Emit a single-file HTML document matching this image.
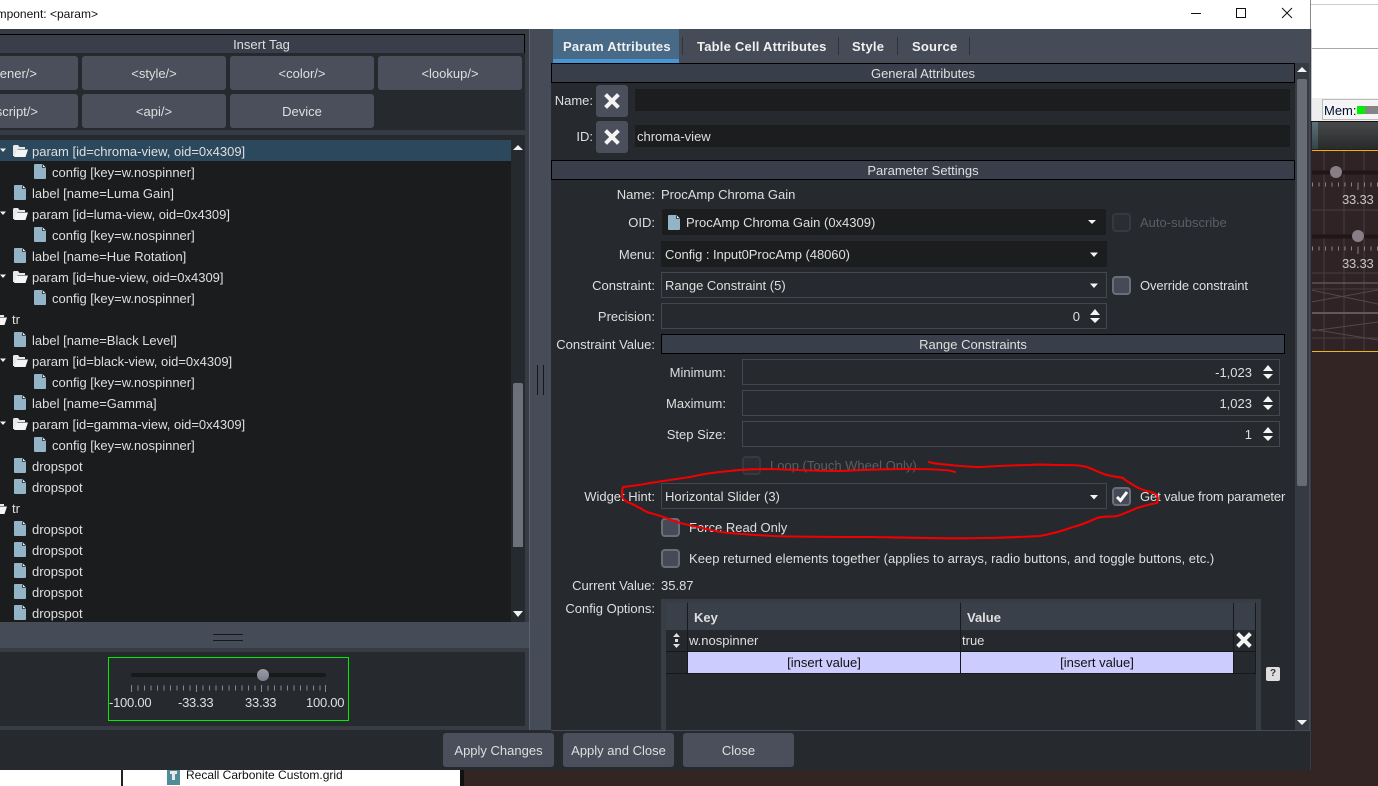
<!DOCTYPE html>
<html>
<head>
<meta charset="utf-8">
<title>Component</title>
<style>
html,body{margin:0;padding:0;background:#332524;}
#p{position:relative;width:1378px;height:786px;overflow:hidden;background:#332524;font-family:"Liberation Sans",Arial,sans-serif;font-size:13px;color:#dfdfdf;letter-spacing:0;}
#p div{position:absolute;box-sizing:border-box;}
.t{position:absolute;white-space:nowrap;line-height:15px;height:15px;}
.r{text-align:right;}
.c{text-align:center;}
.hd{background:#383f4a;border:1px solid #000;height:20px;text-align:center;line-height:19px;}
.btn{background:#4a4f5b;border-radius:3px;text-align:center;line-height:35px;height:34px;}
.in{background:#1b1d1f;}
.bx{border:1px solid #44474d;background:#26292e;height:26px;}
.cb{width:19px;height:19px;background:#454a56;border:2px solid #696e79;border-radius:4px;}
svg{position:absolute;overflow:visible;}
.sep{background:#2f343c;width:1px;height:18px;top:37px;}
.tab{font-weight:bold;top:39px;letter-spacing:.22px;color:#f0f0f0;}
</style>
</head>
<body>
<div id="p">
<svg width="0" height="0" style="position:absolute">
<defs>
<symbol id="doc" viewBox="0 0 12 15"><path d="M1 0H8.500L12 3.500V14a1 1 0 0 1-1 1H1a1 1 0 0 1-1-1V1a1 1 0 0 1 1-1z" fill="#92b4c6"/><path d="M8.500 0.500V3.500H11.500" fill="#fff" stroke="#1b1d1f" stroke-width=".8"/></symbol>
<symbol id="fold" viewBox="0 0 15 12"><path d="M0 1.500Q0 0 1.500 0H5L6.500 2H12V4H4.500L2 11H0z" fill="#e8e8e8"/><path d="M4 4.500H15L12.500 12H1z" fill="#f5f5f5"/></symbol>
<symbol id="x" viewBox="0 0 16 16"><path d="M3 3L13 13M13 3L3 13" stroke="#f4f4f4" stroke-width="4" stroke-linecap="square" fill="none"/></symbol>
</defs>
</svg>

<!-- background window -->
<div style="left:1311px;top:0;width:67px;height:98px;background:#fff;"></div>
<div style="left:1311px;top:4px;width:67px;height:1px;background:#ccc;"></div>
<div style="left:1311px;top:48px;width:67px;height:1px;background:#aaa;"></div>
<div style="left:1311px;top:98px;width:67px;height:24px;background:#eee;"></div>
<div style="left:1322px;top:99px;width:56px;height:21px;background:#f4f4f4;border:1px solid #bbb;border-right:0;"></div>
<span class="t" style="left:1324px;top:103px;font-size:13px;color:#001030;">Mem:</span>
<div style="left:1357px;top:106px;width:21px;height:8px;background:#858585;"></div>
<div style="left:1357px;top:106px;width:8px;height:8px;background:#00f000;"></div>
<div style="left:1311px;top:121px;width:67px;height:1px;background:#111;"></div>
<div style="left:1311px;top:122px;width:67px;height:27px;background:linear-gradient(#47494b,#2a2a2a);"></div>
<div style="left:1311px;top:122px;width:7px;height:27px;background:linear-gradient(#5e7078,#34444a);"></div>
<div style="left:1311px;top:149px;width:67px;height:1px;background:#222;"></div>
<div style="left:1311px;top:150px;width:67px;height:1px;background:#f0b400;"></div>
<div style="left:1311px;top:151px;width:67px;height:200px;background:#2f2326;"></div>
<svg style="left:0;top:0;" width="1378" height="786">
<g stroke="#4a3d42" stroke-width="1" fill="none">
<path d="M1324 151V351M1344 151V351M1364 151V351"/>
<path d="M1311 210H1378M1311 273H1378"/>
<path d="M1311 283H1378" stroke="#75686c"/><path d="M1311 289H1378"/>
<path d="M1311 313H1378" stroke="#64565a" stroke-width="2"/>
<path d="M1311 338H1378"/>
<path d="M1311 302L1378 290M1311 290L1378 304M1311 331L1378 322M1311 329L1378 340" stroke="#55474b"/>
</g>
<path d="M1311 172.500H1378M1311 236.500H1378" stroke="#211617" stroke-width="4"/>
<g stroke="#8f8287" fill="none">
<path d="M1312 184.500H1378M1312 248.500H1378" stroke-width="4" stroke-dasharray="1 5.500"/>
<path d="M1358 183V190M1358 247V254"/>
</g>
<circle cx="1336" cy="172" r="6" fill="#8a7e86"/>
<circle cx="1358" cy="236" r="6" fill="#8a7e86"/>
<path d="M1311 351.500H1378" stroke="#f0b428"/>
</svg>
<span class="t" style="left:1342px;top:192px;font-size:13px;letter-spacing:-.2px;color:#cbc3c3;">33.33</span>
<span class="t" style="left:1342px;top:256px;font-size:13px;letter-spacing:-.2px;color:#cbc3c3;">33.33</span>

<!-- bottom background -->
<div style="left:0;top:770px;width:121px;height:16px;background:#fff;"></div>
<div style="left:121px;top:770px;width:2px;height:16px;background:#222;"></div>
<div style="left:123px;top:770px;width:337px;height:16px;background:#fff;"></div>
<div style="left:460px;top:770px;width:4px;height:16px;background:#111;"></div>
<svg style="left:167px;top:769px;" width="14" height="16"><rect width="13" height="16" fill="#4f8d96"/><path d="M3 2H10V5H8V11H5V5H3z" fill="#e8e8e8"/></svg>
<span class="t" style="left:186px;top:768px;color:#111;font-size:12px;">Recall Carbonite Custom.grid</span>

<!-- dialog -->
<div style="left:0;top:0;width:1310px;height:29px;background:#fff;"></div>
<div style="left:0;top:0;width:98px;height:29px;overflow:hidden;display:flex;justify-content:flex-end;">
<span style="white-space:nowrap;line-height:29px;color:#111;font-size:12px;flex:none;">Component: &lt;param&gt;</span></div>
<svg style="left:1185px;top:0;" width="115" height="29" fill="none" stroke="#111" stroke-width="1">
<path d="M6 13.500H16"/><rect x="51.500" y="8.500" width="9" height="9"/><path d="M97 8L107 18M107 8L97 18"/>
</svg>
<div style="left:0;top:29px;width:1310px;height:741px;background:#454b57;"></div>
<div style="left:1310px;top:0;width:1px;height:29px;background:#8a8a8a;"></div>
<div style="left:1310px;top:29px;width:1px;height:741px;background:#3a3e46;"></div>
<div style="left:1311px;top:29px;width:1px;height:92px;background:#c4c4c4;"></div>
<div style="left:1311px;top:122px;width:1px;height:648px;background:#2c2426;"></div>

<!-- left panel -->
<div style="left:0;top:29px;width:529px;height:593px;background:#373b43;"></div>
<div class="hd" style="left:-2px;top:34px;width:527px;">Insert Tag</div>
<div style="left:0;top:53px;width:525px;height:77px;background:#26292e;"></div>
<div class="btn" style="left:-66px;top:56px;width:144px;"><span style="position:absolute;right:41px;top:0;">&lt;listener/&gt;</span></div>
<div class="btn" style="left:82px;top:56px;width:144px;">&lt;style/&gt;</div>
<div class="btn" style="left:230px;top:56px;width:144px;">&lt;color/&gt;</div>
<div class="btn" style="left:378px;top:56px;width:144px;">&lt;lookup/&gt;</div>
<div class="btn" style="left:-66px;top:94px;width:144px;"><span style="position:absolute;right:40px;top:0;">&lt;script/&gt;</span></div>
<div class="btn" style="left:82px;top:94px;width:144px;">&lt;api/&gt;</div>
<div class="btn" style="left:230px;top:94px;width:144px;">Device</div>

<div style="left:0;top:135px;width:525px;height:487px;background:#26292e;"></div>
<div style="left:0;top:140px;width:511px;height:482px;background:#1a1c1e;"></div>
<div style="left:0;top:140px;width:511px;height:21px;background:#2b485c;"></div>
<div style="left:513px;top:383px;width:10px;height:164px;background:#6c707a;border-radius:2px 2px 0 0;"></div>
<svg style="left:0;top:0;" width="530" height="640" fill="#f2f2f2">
<path d="M513 150L518 145L523 150zM513 611L523 611L518 617z"/>
<path d="M0 148.500H6L3 152zM0 211.500H6L3 215zM0 274.500H6L3 278zM0 358.500H6L3 362zM0 421.500H6L3 425z"/>
</svg>

<svg style="left:13px;top:145px;" width="15" height="12"><use href="#fold"/></svg>
<svg style="left:13px;top:208px;" width="15" height="12"><use href="#fold"/></svg>
<svg style="left:13px;top:271px;" width="15" height="12"><use href="#fold"/></svg>
<svg style="left:-8px;top:313px;" width="15" height="12"><use href="#fold"/></svg>
<svg style="left:13px;top:355px;" width="15" height="12"><use href="#fold"/></svg>
<svg style="left:13px;top:418px;" width="15" height="12"><use href="#fold"/></svg>
<svg style="left:-8px;top:502px;" width="15" height="12"><use href="#fold"/></svg>

<svg style="left:34px;top:164px;" width="12" height="15"><use href="#doc"/></svg>
<svg style="left:14px;top:185px;" width="12" height="15"><use href="#doc"/></svg>
<svg style="left:34px;top:227px;" width="12" height="15"><use href="#doc"/></svg>
<svg style="left:14px;top:248px;" width="12" height="15"><use href="#doc"/></svg>
<svg style="left:34px;top:290px;" width="12" height="15"><use href="#doc"/></svg>
<svg style="left:14px;top:332px;" width="12" height="15"><use href="#doc"/></svg>
<svg style="left:34px;top:374px;" width="12" height="15"><use href="#doc"/></svg>
<svg style="left:14px;top:395px;" width="12" height="15"><use href="#doc"/></svg>
<svg style="left:34px;top:437px;" width="12" height="15"><use href="#doc"/></svg>
<svg style="left:14px;top:458px;" width="12" height="15"><use href="#doc"/></svg>
<svg style="left:14px;top:479px;" width="12" height="15"><use href="#doc"/></svg>
<svg style="left:14px;top:521px;" width="12" height="15"><use href="#doc"/></svg>
<svg style="left:14px;top:542px;" width="12" height="15"><use href="#doc"/></svg>
<svg style="left:14px;top:563px;" width="12" height="15"><use href="#doc"/></svg>
<svg style="left:14px;top:584px;" width="12" height="15"><use href="#doc"/></svg>
<svg style="left:14px;top:605px;" width="12" height="15"><use href="#doc"/></svg>

<span class="t" style="left:32px;top:144px;">param [id=chroma-view, oid=0x4309]</span>
<span class="t" style="left:52px;top:165px;">config [key=w.nospinner]</span>
<span class="t" style="left:32px;top:186px;">label [name=Luma Gain]</span>
<span class="t" style="left:32px;top:207px;">param [id=luma-view, oid=0x4309]</span>
<span class="t" style="left:52px;top:228px;">config [key=w.nospinner]</span>
<span class="t" style="left:32px;top:249px;">label [name=Hue Rotation]</span>
<span class="t" style="left:32px;top:270px;">param [id=hue-view, oid=0x4309]</span>
<span class="t" style="left:52px;top:291px;">config [key=w.nospinner]</span>
<span class="t" style="left:12px;top:312px;">tr</span>
<span class="t" style="left:32px;top:333px;">label [name=Black Level]</span>
<span class="t" style="left:32px;top:354px;">param [id=black-view, oid=0x4309]</span>
<span class="t" style="left:52px;top:375px;">config [key=w.nospinner]</span>
<span class="t" style="left:32px;top:396px;">label [name=Gamma]</span>
<span class="t" style="left:32px;top:417px;">param [id=gamma-view, oid=0x4309]</span>
<span class="t" style="left:52px;top:438px;">config [key=w.nospinner]</span>
<span class="t" style="left:32px;top:459px;">dropspot</span>
<span class="t" style="left:32px;top:480px;">dropspot</span>
<span class="t" style="left:12px;top:501px;">tr</span>
<span class="t" style="left:32px;top:522px;">dropspot</span>
<span class="t" style="left:32px;top:543px;">dropspot</span>
<span class="t" style="left:32px;top:564px;">dropspot</span>
<span class="t" style="left:32px;top:585px;">dropspot</span>
<span class="t" style="left:32px;top:606px;">dropspot</span>

<!-- splitter / preview -->
<div style="left:213px;top:634px;width:30px;height:1px;background:#15171a;"></div>
<div style="left:213px;top:640px;width:30px;height:1px;background:#15171a;"></div>
<div style="left:0;top:648px;width:529px;height:82px;background:#373b43;"></div>
<div style="left:0;top:652px;width:525px;height:74px;background:#26292e;"></div>
<div style="left:108px;top:657px;width:241px;height:64px;border:1px solid #00ee00;"></div>
<div style="left:131px;top:673px;width:195px;height:4px;background:#17191b;border-radius:2px;"></div>
<svg style="left:0;top:0;" width="400" height="730">
<defs><linearGradient id="g" x1="0" y1="0" x2="0" y2="1"><stop offset="0" stop-color="#999ca6"/><stop offset="1" stop-color="#7c7f8a"/></linearGradient></defs>
<circle cx="263" cy="675" r="6" fill="url(#g)"/>
<line x1="131" x2="326" y1="688" y2="688" stroke="#85888f" stroke-width="5" stroke-dasharray="1 5.500"/>
<path d="M131.500 685V692M196.500 685V692M261.500 685V692M325.500 685V692" stroke="#85888f"/>
</svg>
<span class="t" style="left:109px;top:695px;font-size:13px;letter-spacing:-.25px;">-100.00</span>
<span class="t" style="left:178px;top:695px;font-size:13px;letter-spacing:-.25px;">-33.33</span>
<span class="t" style="left:245px;top:695px;font-size:13px;letter-spacing:-.25px;">33.33</span>
<span class="t" style="left:306px;top:695px;font-size:13px;letter-spacing:-.25px;">100.00</span>

<!-- middle line + grip -->
<div style="left:529px;top:29px;width:1px;height:701px;background:#5d616b;"></div>
<div style="left:537px;top:365px;width:1px;height:30px;background:#15171a;"></div>
<div style="left:543px;top:365px;width:1px;height:30px;background:#15171a;"></div>

<!-- tabs -->
<div style="left:553px;top:29px;width:126px;height:30px;background:#486a87;"></div>
<div style="left:553px;top:59px;width:126px;height:4px;background:#4796d6;"></div>
<div class="sep" style="left:682px;"></div>
<div class="sep" style="left:838px;"></div>
<div class="sep" style="left:897px;"></div>
<div class="sep" style="left:969px;"></div>
<span class="t tab" style="left:563px;">Param Attributes</span>
<span class="t tab" style="left:697px;">Table Cell Attributes</span>
<span class="t tab" style="left:852px;">Style</span>
<span class="t tab" style="left:912px;">Source</span>

<!-- right panel -->
<div style="left:551px;top:63px;width:744px;height:667px;background:#26292e;"></div>
<div style="left:1295px;top:63px;width:14px;height:667px;background:#353a43;"></div>
<div style="left:1297px;top:79px;width:10px;height:407px;background:#666b76;border-radius:2px;"></div>
<svg style="left:0;top:0;" width="1310" height="730" fill="#f4f4f4">
<path d="M1297 72L1302 67L1307 72zM1297 720H1307L1302 725z"/>
</svg>
<div class="hd" style="left:551px;top:63px;width:744px;">General Attributes</div>
<span class="t r" style="right:785px;top:93px;">Name:</span>
<div class="btn" style="left:596px;top:85px;width:32px;height:32px;"></div>
<svg style="left:604px;top:93px;" width="16" height="16"><use href="#x"/></svg>
<div class="in" style="left:635px;top:89px;width:655px;height:22px;"></div>
<span class="t r" style="right:785px;top:129px;">ID:</span>
<div class="btn" style="left:596px;top:121px;width:32px;height:32px;"></div>
<svg style="left:604px;top:129px;" width="16" height="16"><use href="#x"/></svg>
<div class="in" style="left:635px;top:125px;width:655px;height:22px;"></div>
<span class="t" style="left:637px;top:129px;">chroma-view</span>

<div class="hd" style="left:551px;top:160px;width:744px;">Parameter Settings</div>
<span class="t r" style="right:723px;top:187px;">Name:</span>
<span class="t" style="left:661px;top:187px;">ProcAmp Chroma Gain</span>

<span class="t r" style="right:723px;top:215px;">OID:</span>
<div class="in" style="left:662px;top:209px;width:444px;height:26px;"></div>
<svg style="left:668px;top:215px;" width="12" height="15"><use href="#doc"/></svg>
<span class="t" style="left:686px;top:215px;">ProcAmp Chroma Gain (0x4309)</span>
<div class="cb" style="left:1112px;top:213px;background:#2a2d32;border-color:#36393f;"></div>
<span class="t" style="left:1140px;top:215px;color:#5b5e64;">Auto-subscribe</span>

<span class="t r" style="right:723px;top:247px;">Menu:</span>
<div class="in" style="left:661px;top:241px;width:446px;height:26px;"></div>
<span class="t" style="left:665px;top:247px;letter-spacing:-.05px;">Config : Input0ProcAmp (48060)</span>

<span class="t r" style="right:723px;top:278px;">Constraint:</span>
<div class="bx" style="left:661px;top:272px;width:446px;"></div>
<span class="t" style="left:665px;top:278px;">Range Constraint (5)</span>
<div class="cb" style="left:1112px;top:276px;"></div>
<span class="t" style="left:1140px;top:278px;letter-spacing:-.1px;">Override constraint</span>

<span class="t r" style="right:723px;top:309px;">Precision:</span>
<div class="bx" style="left:661px;top:303px;width:446px;"></div>
<span class="t r" style="right:298px;top:309px;">0</span>

<span class="t r" style="right:723px;top:337px;">Constraint Value:</span>
<div class="hd" style="left:661px;top:334px;width:624px;">Range Constraints</div>

<span class="t r" style="right:652px;top:365px;">Minimum:</span>
<div class="bx" style="left:742px;top:359px;width:538px;"></div>
<span class="t r" style="right:126px;top:365px;">-1,023</span>
<span class="t r" style="right:652px;top:396px;">Maximum:</span>
<div class="bx" style="left:742px;top:390px;width:538px;"></div>
<span class="t r" style="right:126px;top:396px;">1,023</span>
<span class="t r" style="right:652px;top:427px;">Step Size:</span>
<div class="bx" style="left:742px;top:421px;width:538px;"></div>
<span class="t r" style="right:126px;top:427px;">1</span>

<div class="cb" style="left:742px;top:456px;background:#2a2d32;border-color:#36393f;"></div>
<span class="t" style="left:770px;top:458px;color:#5b5e64;">Loop (Touch Wheel Only)</span>

<span class="t r" style="right:723px;top:489px;">Widget Hint:</span>
<div class="bx" style="left:661px;top:483px;width:446px;"></div>
<span class="t" style="left:665px;top:489px;">Horizontal Slider (3)</span>
<div class="cb" style="left:1112px;top:487px;"></div>
<svg style="left:1112px;top:487px;" width="19" height="19"><path d="M5 10L8.500 13.500L15 5" fill="none" stroke="#fff" stroke-width="3"/></svg>
<span class="t" style="left:1140px;top:489px;letter-spacing:-.12px;">Get value from parameter</span>

<div class="cb" style="left:661px;top:518px;"></div>
<span class="t" style="left:689px;top:520px;">Force Read Only</span>
<div class="cb" style="left:661px;top:549px;"></div>
<span class="t" style="left:689px;top:551px;letter-spacing:.03px;">Keep returned elements together (applies to arrays, radio buttons, and toggle buttons, etc.)</span>

<span class="t r" style="right:723px;top:578px;">Current Value:</span>
<span class="t" style="left:661px;top:578px;">35.87</span>
<span class="t r" style="right:723px;top:601px;">Config Options:</span>

<!-- table -->
<div style="left:661px;top:599px;width:600px;height:131px;background:#383c43;"></div>
<div style="left:666px;top:603px;width:590px;height:127px;background:#26292e;"></div>
<div style="left:666px;top:603px;width:590px;height:27px;background:#3a404a;"></div>
<div style="left:666px;top:630px;width:590px;height:22px;background:#25282c;"></div>
<div style="left:688px;top:652px;width:545px;height:21px;background:#ccccff;"></div>
<div style="left:666px;top:651px;width:590px;height:1px;background:#15171a;"></div>
<div style="left:666px;top:673px;width:590px;height:1px;background:#15171a;"></div>
<div style="left:687px;top:603px;width:1px;height:70px;background:#17191c;"></div>
<div style="left:960px;top:603px;width:1px;height:70px;background:#17191c;"></div>
<div style="left:1233px;top:603px;width:1px;height:70px;background:#17191c;"></div>
<div style="left:1255px;top:603px;width:1px;height:70px;background:#17191c;"></div>
<span class="t" style="left:694px;top:610px;font-weight:bold;">Key</span>
<span class="t" style="left:967px;top:610px;font-weight:bold;">Value</span>
<span class="t" style="left:689px;top:633px;">w.nospinner</span>
<span class="t" style="left:962px;top:633px;">true</span>
<span class="t c" style="left:688px;width:272px;top:655px;color:#111;">[insert value]</span>
<span class="t c" style="left:961px;width:272px;top:655px;color:#111;">[insert value]</span>
<svg style="left:1236px;top:632px;" width="16" height="16"><use href="#x"/></svg>
<svg style="left:0;top:0;" width="700" height="700" fill="#e0e0e0">
<path d="M673 637L676.500 633L680 637zM673 644H680L676.500 648z"/><rect x="675" y="639" width="3" height="3"/>
</svg>
<div style="left:1266px;top:667px;width:14px;height:14px;background:#dedede;border-radius:2px;color:#333;font-weight:bold;font-size:10px;text-align:center;line-height:14px;">?</div>

<!-- arrows -->
<svg style="left:0;top:0;" width="1310" height="730" fill="#f4f4f4">
<path d="M1088 220H1096L1092 224zM1090 252.500H1098L1094 257zM1090 283.500H1098L1094 288zM1090 495H1098L1094 499.500z"/>
<path d="M1090 315L1095 309L1100 315zM1090 318H1100L1095 323z"/>
<path d="M1263 371L1268 365L1273 371zM1263 374H1273L1268 379z"/>
<path d="M1263 402L1268 396L1273 402zM1263 405H1273L1268 410z"/>
<path d="M1263 433L1268 427L1273 433zM1263 436H1273L1268 441z"/>
</svg>

<!-- bottom bar -->
<div style="left:0;top:726px;width:529px;height:4px;background:#373b43;"></div>
<div style="left:0;top:730px;width:1310px;height:40px;background:#26292e;"></div>
<div style="left:551px;top:730px;width:759px;height:1px;background:#454b57;"></div>
<div class="btn" style="left:443px;top:733px;width:111px;">Apply Changes</div>
<div class="btn" style="left:563px;top:733px;width:111px;">Apply and Close</div>
<div class="btn" style="left:683px;top:733px;width:111px;">Close</div>

<!-- red annotation -->
<svg style="left:0;top:0;" width="1378" height="786" fill="none" stroke="#f00000" stroke-width="2.100" stroke-linecap="round" stroke-linejoin="round">
<path d="M929 462C935 464 940 464 950 465C960 466 970 467 980 467C1000 466 1015 465 1030 465C1040 464 1050 465 1060 465C1070 465 1080 465 1087 467C1095 470 1100 473 1107 475C1115 477 1119 477 1123 478C1126 481 1128 482 1130 483C1136 487 1142 490 1147 491C1151 492 1155 493 1157 495C1158 498 1158 501 1157 503C1150 504 1144 506 1137 508C1130 511 1124 514 1117 516C1110 517 1103 516 1097 518C1090 521 1082 525 1073 527C1062 531 1051 534 1040 536C1020 537 1000 538 980 538C960 539 930 538 873 537C840 537 805 537 773 536C755 535 737 534 720 532C707 529 693 526 680 523C670 520 660 515 650 513C646 512 643 510 640 508C636 506 631 503 627 502C624 500 622 498 622 495C622 492 622 489 623 487C632 486 641 485 650 483C663 481 677 479 690 477C703 474 717 472 730 471C745 469 760 469 773 469C795 470 818 471 840 471C862 470 885 469 907 469C920 469 932 469 943 470C948 470 952 471 955 472"/>
</svg>
</div>
</body>
</html>
